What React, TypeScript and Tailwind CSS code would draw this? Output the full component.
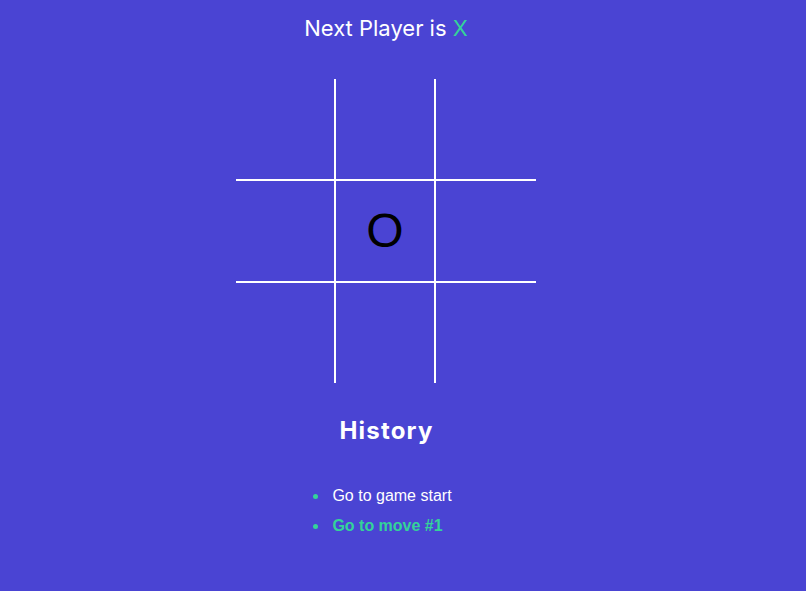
import React, { useState } from 'react'

type Cell = 'X' | 'O' | null

export default function App() {
  const [board] = useState<Cell[]>([null, null, null, null, 'O', null, null, null, null])
  const moves = ['Go to game start', 'Go to move #1']
  const current = 1

  // inner grid lines only: right border on the first two columns, bottom border on the first two rows
  const cellBorder = (i: number) => {
    const col = i % 3
    const row = Math.floor(i / 3)
    return [
      col < 2 ? 'border-r-2' : '',
      row < 2 ? 'border-b-2' : '',
    ].join(' ')
  }

  return (
    <div className="min-h-[591px] w-full bg-[#4a44d3] font-['Inter',sans-serif]">
      <div className="flex w-[772px] flex-col items-center pt-[14px]">
        <h2 className="text-[22px] leading-[28px] text-white">
          Next Player is <span className="text-[#34d399]">X</span>
        </h2>

        <div className="mt-[37px] grid grid-cols-[100px_100px_100px] grid-rows-[102px_102px_100px]">
          {board.map((cell, i) => (
            <div
              key={i}
              className={`flex items-center justify-center border-white text-[48px] text-black font-['Liberation_Sans',sans-serif] ${cellBorder(i)}`}
            >
              {cell}
            </div>
          ))}
        </div>

        <h3 className="mt-[32px] ml-[1px] text-[24px] leading-8 font-bold tracking-[1.2px] text-white">History</h3>

        <ul className="mt-[34px] ml-[-7px] flex flex-col font-['Liberation_Sans',sans-serif] text-[16px] leading-[30px]">
          {moves.map((label, i) => (
            <li key={label} className="flex items-center gap-[14px]">
              <span className="h-[5px] w-[5px] rounded-full bg-[#34d399]" />
              <span className={i === current ? 'font-bold text-[#34d399]' : 'text-white'}>
                {label}
              </span>
            </li>
          ))}
        </ul>
      </div>
    </div>
  )
}
